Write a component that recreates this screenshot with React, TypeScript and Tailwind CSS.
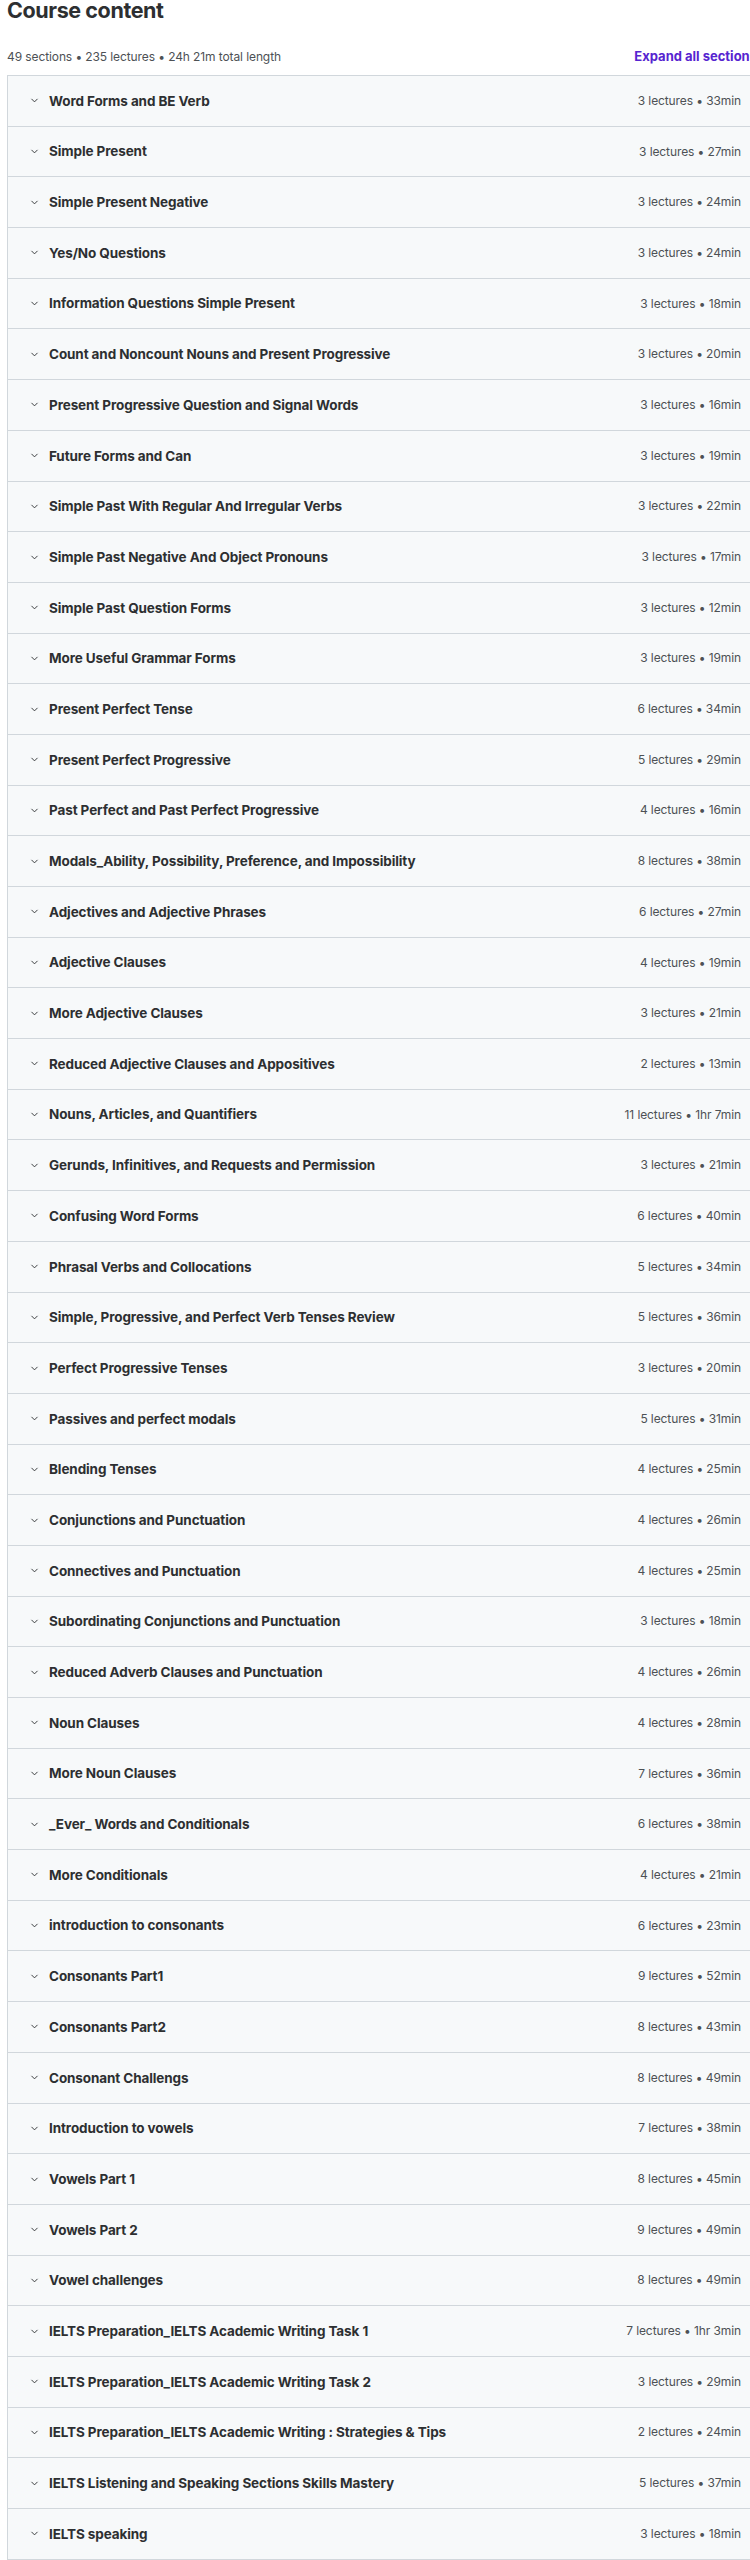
import { ChevronDown } from "lucide-react"

type Section = {
  title: string
  meta: string
}

const sections: Section[] = [
  { title: "Word Forms and BE Verb", meta: "3 lectures • 33min" },
  { title: "Simple Present", meta: "3 lectures • 27min" },
  { title: "Simple Present Negative", meta: "3 lectures • 24min" },
  { title: "Yes/No Questions", meta: "3 lectures • 24min" },
  { title: "Information Questions Simple Present", meta: "3 lectures • 18min" },
  { title: "Count and Noncount Nouns and Present Progressive", meta: "3 lectures • 20min" },
  { title: "Present Progressive Question and Signal Words", meta: "3 lectures • 16min" },
  { title: "Future Forms and Can", meta: "3 lectures • 19min" },
  { title: "Simple Past With Regular And Irregular Verbs", meta: "3 lectures • 22min" },
  { title: "Simple Past Negative And Object Pronouns", meta: "3 lectures • 17min" },
  { title: "Simple Past Question Forms", meta: "3 lectures • 12min" },
  { title: "More Useful Grammar Forms", meta: "3 lectures • 19min" },
  { title: "Present Perfect Tense", meta: "6 lectures • 34min" },
  { title: "Present Perfect Progressive", meta: "5 lectures • 29min" },
  { title: "Past Perfect and Past Perfect Progressive", meta: "4 lectures • 16min" },
  { title: "Modals_Ability, Possibility, Preference, and Impossibility", meta: "8 lectures • 38min" },
  { title: "Adjectives and Adjective Phrases", meta: "6 lectures • 27min" },
  { title: "Adjective Clauses", meta: "4 lectures • 19min" },
  { title: "More Adjective Clauses", meta: "3 lectures • 21min" },
  { title: "Reduced Adjective Clauses and Appositives", meta: "2 lectures • 13min" },
  { title: "Nouns, Articles, and Quantifiers", meta: "11 lectures • 1hr 7min" },
  { title: "Gerunds, Infinitives, and Requests and Permission", meta: "3 lectures • 21min" },
  { title: "Confusing Word Forms", meta: "6 lectures • 40min" },
  { title: "Phrasal Verbs and Collocations", meta: "5 lectures • 34min" },
  { title: "Simple, Progressive, and Perfect Verb Tenses Review", meta: "5 lectures • 36min" },
  { title: "Perfect Progressive Tenses", meta: "3 lectures • 20min" },
  { title: "Passives and perfect modals", meta: "5 lectures • 31min" },
  { title: "Blending Tenses", meta: "4 lectures • 25min" },
  { title: "Conjunctions and Punctuation", meta: "4 lectures • 26min" },
  { title: "Connectives and Punctuation", meta: "4 lectures • 25min" },
  { title: "Subordinating Conjunctions and Punctuation", meta: "3 lectures • 18min" },
  { title: "Reduced Adverb Clauses and Punctuation", meta: "4 lectures • 26min" },
  { title: "Noun Clauses", meta: "4 lectures • 28min" },
  { title: "More Noun Clauses", meta: "7 lectures • 36min" },
  { title: "_Ever_ Words and Conditionals", meta: "6 lectures • 38min" },
  { title: "More Conditionals", meta: "4 lectures • 21min" },
  { title: "introduction to consonants", meta: "6 lectures • 23min" },
  { title: "Consonants Part1", meta: "9 lectures • 52min" },
  { title: "Consonants Part2", meta: "8 lectures • 43min" },
  { title: "Consonant Challengs", meta: "8 lectures • 49min" },
  { title: "Introduction to vowels", meta: "7 lectures • 38min" },
  { title: "Vowels Part 1", meta: "8 lectures • 45min" },
  { title: "Vowels Part 2", meta: "9 lectures • 49min" },
  { title: "Vowel challenges", meta: "8 lectures • 49min" },
  { title: "IELTS Preparation_IELTS Academic Writing Task 1", meta: "7 lectures • 1hr 3min" },
  { title: "IELTS Preparation_IELTS Academic Writing Task 2", meta: "3 lectures • 29min" },
  { title: "IELTS Preparation_IELTS Academic Writing : Strategies & Tips", meta: "2 lectures • 24min" },
  { title: "IELTS Listening and Speaking Sections Skills Mastery", meta: "5 lectures • 37min" },
  { title: "IELTS speaking", meta: "3 lectures • 18min" },
]

function SectionRow({ section }: { section: Section }) {
  return (
    <div className="flex h-[50.7px] items-center justify-between border-b border-[#d1d7dc] bg-[#f7f9fa] pl-[21px] pr-[26px]">
      <div className="flex items-center gap-[9px]">
        <ChevronDown className="size-[11px] text-[#2d2f31]" strokeWidth={2} />
        <span className="text-[13.5px] font-bold tracking-[-0.1px] text-[#2d2f31]">{section.title}</span>
      </div>
      <span className="text-[12px] tracking-[-0.1px] text-[#4d5155]">{section.meta}</span>
    </div>
  )
}

export default function App() {
  return (
    <div className="h-[2560px] w-[750px] overflow-hidden bg-white pl-[7px] font-['Inter',sans-serif] text-[#2d2f31]">
      <h2 className="-mt-[6px] text-[21.5px] leading-[32px] font-bold tracking-[-0.4px]">Course content</h2>

      <div className="mt-[16px] flex h-[30px] w-[760px] items-center justify-between pr-[10px]">
        <span className="text-[12px] tracking-[-0.1px] text-[#4d5155]">
          49 sections • 235 lectures • 24h 21m total length
        </span>
        <button type="button" className="text-[13px] font-bold text-[#5624d0]">
          Expand all sections
        </button>
      </div>

      <div className="mt-[3px] w-[760px] border-t border-l border-[#d1d7dc]">
        {sections.map((section) => (
          <SectionRow key={section.title} section={section} />
        ))}
      </div>
    </div>
  )
}
